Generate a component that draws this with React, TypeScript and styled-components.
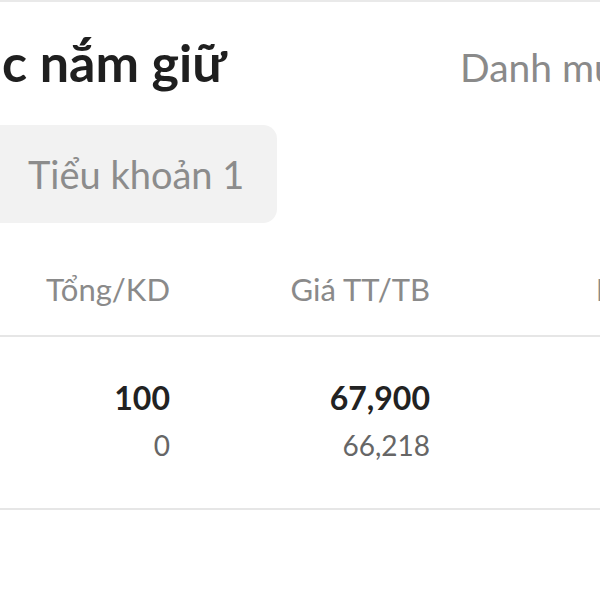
import styled, { createGlobalStyle } from "styled-components";

const GlobalStyle = createGlobalStyle`
  html, body {
    margin: 0;
    padding: 0;
    background: #ffffff;
  }
  body {
    font-family: Lato, "Noto Sans", sans-serif;
  }
`;

const Screen = styled.div`
  width: 600px;
  height: 600px;
  overflow: hidden;
  background: #ffffff;
  border-top: 2px solid #e9e9e9;
  box-sizing: border-box;
`;

const TitleBar = styled.div`
  display: grid;
  grid-template-columns: 460px 1fr;
  align-items: baseline;
  padding-top: 34px;
  white-space: nowrap;
`;

const Title = styled.h1`
  margin: 0 0 0 2px;
  font-size: 52px;
  line-height: 52px;
  font-weight: 700;
  color: #1f1f1f;
`;

const TabLink = styled.span`
  font-size: 39px;
  line-height: 39px;
  color: #8a8a8a;
`;

const AccountRow = styled.div`
  display: flex;
  margin-top: 37px;
`;

const AccountPill = styled.div`
  display: flex;
  align-items: center;
  height: 98px;
  width: 297px;
  margin-left: -20px;
  padding-left: 48px;
  box-sizing: border-box;
  border-radius: 14px;
  background: #f2f2f2;
  font-size: 38px;
  color: #8c8c8c;
  white-space: nowrap;
`;

const Columns = styled.div`
  display: grid;
  grid-template-columns: 170px 260px 251px;
  border-bottom: 2px solid #e6e6e6;
  white-space: nowrap;
`;

const HeaderRow = styled(Columns)`
  padding: 51px 0 30px;
`;

const BodyRow = styled(Columns)`
  padding: 44px 0 49px;
`;

const HeaderCell = styled.div`
  text-align: right;
  font-size: 31px;
  line-height: 31px;
  color: #8a8a8a;
`;

const Cell = styled.div`
  display: flex;
  flex-direction: column;
  align-items: flex-end;
  gap: 17px;
`;

const MainValue = styled.span`
  font-size: 32px;
  line-height: 33px;
  font-weight: 700;
  color: #222222;
`;

const SubValue = styled.span`
  font-size: 28px;
  line-height: 28px;
  color: #666666;
`;

const holdings = [
  { total: "100", available: "0", price: "67,900", avg: "66,218" },
];

export default function App() {
  return (
    <>
      <GlobalStyle />
      <Screen>
        <TitleBar>
          <Title>c nắm giữ</Title>
          <TabLink>Danh mục</TabLink>
        </TitleBar>

        <AccountRow>
          <AccountPill>Tiểu khoản 1</AccountPill>
        </AccountRow>

        <HeaderRow>
          <HeaderCell>Tổng/KD</HeaderCell>
          <HeaderCell>Giá TT/TB</HeaderCell>
          <HeaderCell>Lãi/Lỗ</HeaderCell>
        </HeaderRow>

        {holdings.map((h, i) => (
          <BodyRow key={i}>
            <Cell>
              <MainValue>{h.total}</MainValue>
              <SubValue>{h.available}</SubValue>
            </Cell>
            <Cell>
              <MainValue>{h.price}</MainValue>
              <SubValue>{h.avg}</SubValue>
            </Cell>
            <Cell />
          </BodyRow>
        ))}
      </Screen>
    </>
  );
}
